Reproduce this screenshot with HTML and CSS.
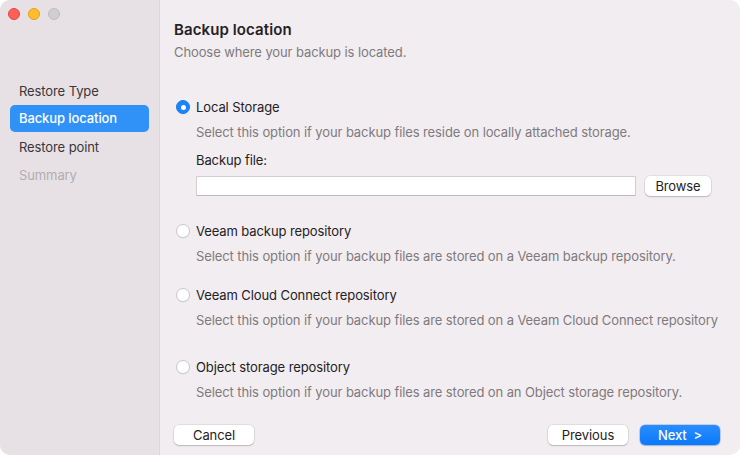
FILE: index.html
```html
<!DOCTYPE html>
<html>
<head>
<meta charset="utf-8">
<link rel="stylesheet" href="styles.css">
</head>
<body>
<div class="window">
  <aside class="sidebar">
    <div class="lights">
      <span class="light red"></span>
      <span class="light yellow"></span>
      <span class="light gray"></span>
    </div>
    <ul class="steps">
      <li class="step">Restore Type</li>
      <li class="step active">Backup location</li>
      <li class="step">Restore point</li>
      <li class="step disabled">Summary</li>
    </ul>
  </aside>
  <main class="main">
    <h1 class="title">Backup location</h1>
    <p class="subtitle">Choose where your backup is located.</p>

    <div class="option first">
      <span class="radio checked"></span>
      <span class="option-label">Local Storage</span>
    </div>
    <p class="desc">Select this option if your backup files reside on locally attached storage.</p>
    <p class="field-label">Backup file:</p>
    <div class="file-row">
      <div class="input"></div>
      <button class="btn browse">Browse</button>
    </div>

    <div class="option veeam">
      <span class="radio"></span>
      <span class="option-label">Veeam backup repository</span>
    </div>
    <p class="desc">Select this option if your backup files are stored on a Veeam backup repository.</p>

    <div class="option cloud">
      <span class="radio"></span>
      <span class="option-label">Veeam Cloud Connect repository</span>
    </div>
    <p class="desc">Select this option if your backup files are stored on a Veeam Cloud Connect repository</p>

    <div class="option object">
      <span class="radio"></span>
      <span class="option-label">Object storage repository</span>
    </div>
    <p class="desc">Select this option if your backup files are stored on an Object storage repository.</p>

    <div class="footer">
      <button class="btn wide">Cancel</button>
      <div class="nav">
        <button class="btn wide">Previous</button>
        <button class="btn wide primary">Next&nbsp; &gt;</button>
      </div>
    </div>
  </main>
</div>
</body>
</html>
```
FILE: styles.css
```css
* { box-sizing: border-box; }
html, body { margin: 0; padding: 0; background: #ffffff; }
body {
  width: 740px;
  height: 455px;
  font-family: Inter, "Noto Sans", "Liberation Sans", sans-serif;
  font-size: 13px;
  letter-spacing: -0.1px;
  color: #242124;
  -webkit-font-smoothing: antialiased;
}
.window {
  display: flex;
  width: 740px;
  height: 455px;
  border-radius: 10px;
  overflow: hidden;
  background: #f2edf0;
}
.sidebar {
  width: 160px;
  flex: none;
  background: #e7e1e5;
  border-right: 1px solid #dcd6da;
  display: flex;
  flex-direction: column;
}
.lights {
  display: flex;
  gap: 8px;
  padding: 8px 0 0 8px;
  height: 77px;
}
.light {
  width: 12px;
  height: 12px;
  border-radius: 50%;
}
.red { background: #fe5f57; border: 0.5px solid #e2463f; }
.yellow { background: #febc2e; border: 0.5px solid #e1a116; }
.gray { background: #d1ced1; border: 0.5px solid #bfbbbf; }
.steps {
  list-style: none;
  margin: 0;
  padding: 0;
}
.step {
  height: 28px;
  line-height: 28px;
  margin: 0 10px;
  padding-left: 9px;
  border-radius: 5px;
  color: #3a3639;
}
.step.active {
  background: #3091f7;
  color: #ffffff;
  font-weight: 500;
  height: 27px;
  line-height: 27px;
  margin-bottom: 1px;
}
.step.disabled { color: #b2adb0; }

.main {
  flex: 1;
  padding: 20px 0 0 14px;
  display: flex;
  flex-direction: column;
}
.title {
  margin: 0;
  font-size: 15px;
  font-weight: 600;
  letter-spacing: 0.1px;
  line-height: 20px;
  color: #242124;
}
.subtitle {
  margin: 4px 0 0;
  line-height: 16px;
  color: #7f7a7e;
}
.option {
  display: flex;
  align-items: center;
  height: 16px;
  padding-left: 2px;
}
.option.first { margin-top: 39px; }
.option.veeam { margin-top: 27px; }
.option.cloud { margin-top: 23px; }
.option.object { margin-top: 31px; }
.radio {
  width: 14px;
  height: 14px;
  border-radius: 50%;
  background: #ffffff;
  border: 1px solid #cdc8cc;
  box-shadow: 0 0.5px 1px rgba(0,0,0,0.08);
  margin-right: 6px;
  flex: none;
}
.radio.checked {
  background: #1b84fc;
  border-color: #1a7ef0;
  position: relative;
}
.radio.checked::after {
  content: "";
  position: absolute;
  width: 5px;
  height: 5px;
  border-radius: 50%;
  background: #ffffff;
  left: 3.5px;
  top: 3.5px;
}
.option-label { color: #242124; }
.desc {
  margin: 9px 0 0 22px;
  line-height: 16px;
  color: #7f7a7e;
  white-space: nowrap;
}
.field-label {
  margin: 12px 0 0 22px;
  line-height: 16px;
  color: #242124;
}
.file-row {
  display: flex;
  align-items: flex-start;
  margin: 8px 0 0 22px;
  height: 20px;
}
.input {
  width: 440px;
  height: 20px;
  background: #ffffff;
  border: 1px solid #d3ced2;
  border-bottom-color: #bfbabe;
}
.btn {
  font-family: inherit;
  font-size: 13px;
  letter-spacing: -0.1px;
  color: #242124;
  background: #ffffff;
  border: none;
  border-radius: 5px;
  height: 20px;
  line-height: 20px;
  padding: 0;
  box-shadow: 0 0 0 0.5px rgba(0,0,0,0.12), 0 1px 1.5px rgba(0,0,0,0.18);
}
.browse {
  width: 66px;
  margin-left: 9px;
}
.footer {
  display: flex;
  justify-content: space-between;
  margin-top: 25px;
  padding-right: 20px;
}
.nav { display: flex; gap: 12px; }
.wide { width: 80px; }
.primary {
  color: #ffffff;
  font-weight: 500;
  background: linear-gradient(#2b8dfd, #0a79fb);
  box-shadow: 0 0 0 0.5px rgba(0,90,220,0.4), 0 1px 1.5px rgba(0,0,0,0.15);
}
```
